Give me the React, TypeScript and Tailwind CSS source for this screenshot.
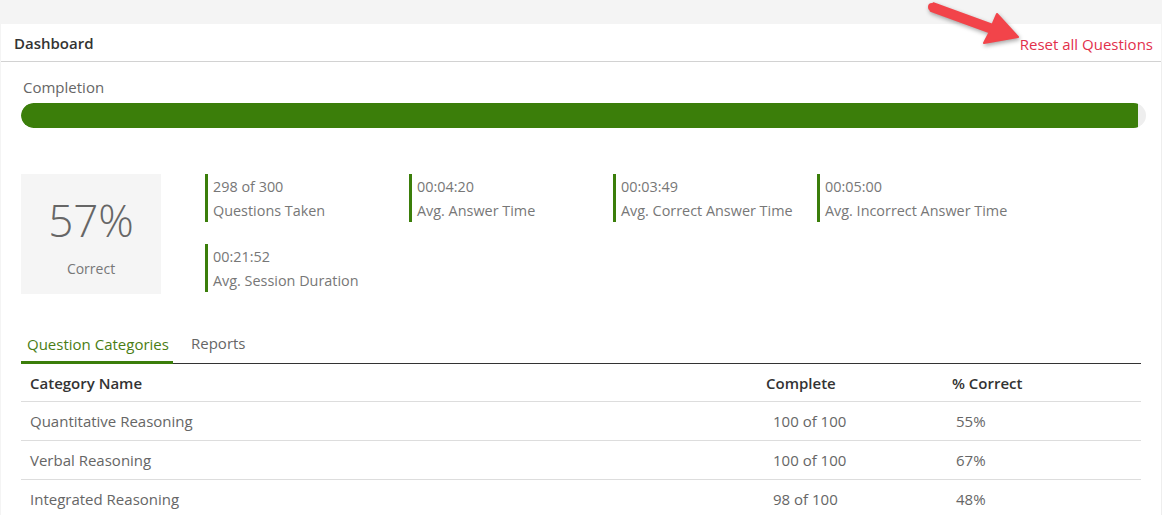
import React from "react";

const stats = [
  { v: "298 of 300", l: "Questions Taken" },
  { v: "00:04:20", l: "Avg. Answer Time" },
  { v: "00:03:49", l: "Avg. Correct Answer Time" },
  { v: "00:05:00", l: "Avg. Incorrect Answer Time" },
  { v: "00:21:52", l: "Avg. Session Duration" },
];

const rows = [
  { n: "Quantitative Reasoning", c: "100 of 100", p: "55%" },
  { n: "Verbal Reasoning", c: "100 of 100", p: "67%" },
  { n: "Integrated Reasoning", c: "98 of 100", p: "48%" },
];

export default function App() {
  return (
    <div
      className="relative w-[1162px] h-[515px] overflow-hidden bg-[#f4f4f4] pt-[24px]"
      style={{ fontFamily: "'Open Sans', 'Liberation Sans', sans-serif" }}
    >
      <div className="ml-[1px] w-[1160px] h-[491px] bg-white">
        <div className="h-[38px] flex items-center justify-between border-b border-[#d2d2d2] pl-[13px] pr-[8px]">
          <span className="text-[15px] font-semibold text-[#333] mt-[2px]">Dashboard</span>
          <span className="text-[15px] text-[#e2304b] mt-[3px]">Reset all Questions</span>
        </div>
        <div className="pl-[20px] pr-[15px]">
          <div className="pt-[15px] pl-[2px] text-[15px] leading-[20px] text-[#666]">Completion</div>
          <div className="mt-[6px] h-[25px] w-[1125px] rounded-full bg-[#eeeeee] overflow-hidden">
            <div className="h-full bg-[#3b7e0a] rounded-l-full" style={{ width: "1117px" }} />
          </div>
          <div className="mt-[46px] flex">
            <div className="w-[140px] h-[120px] bg-[#f5f5f5] flex flex-col items-center text-[#666]">
              <div className="mt-[18px] text-[44px] font-light leading-[56px]">57%</div>
              <div className="mt-[11px] text-[14px] leading-[20px] text-[#777]">Correct</div>
            </div>
            <div className="ml-[44px] grid grid-cols-[204px_204px_204px_204px] gap-y-[20px]">
              {stats.map((s) => (
                <div key={s.l} className="border-l-[3px] border-[#3b7e0a] pl-[5px] h-[48px] text-[14.4px] text-[#777] whitespace-nowrap">
                  <div className="leading-[24px] pt-[1px]">{s.v}</div>
                  <div className="leading-[24px]">{s.l}</div>
                </div>
              ))}
            </div>
          </div>
          <div className="mt-[33px] w-[1120px] flex border-b border-[#333] h-[37px] items-end">
            <div className="w-[152px] shrink-0 h-full flex items-center px-[6px] whitespace-nowrap text-[15px] text-[#4a7d14] border-b-[3px] border-[#3b7e0a] -mb-[1px]">
              Question Categories
            </div>
            <div className="h-full flex items-center pl-[18px] pb-[3px] whitespace-nowrap text-[15px] text-[#666]">Reports</div>
          </div>
          <div className="w-[1120px]">
            <div className="flex h-[38px] items-center border-b border-[#dddddd] text-[15px] font-semibold text-[#333] pt-[2px]">
              <div className="pl-[9px] w-[745px]">Category Name</div>
              <div className="w-[186px]">Complete</div>
              <div>% Correct</div>
            </div>
            {rows.map((r) => (
              <div key={r.n} className="flex h-[39px] items-center border-b border-[#dddddd] text-[15px] text-[#666]">
                <div className="pl-[9px] w-[752px]">{r.n}</div>
                <div className="w-[183px]">{r.c}</div>
                <div>{r.p}</div>
              </div>
            ))}
          </div>
        </div>
      </div>
      <div className="absolute right-0 top-[62px] w-[1px] h-[460px] bg-[#eeeeee]" />
      <svg
        className="absolute left-0 top-0 pointer-events-none drop-shadow-[1px_2px_2px_rgba(0,0,0,0.35)]"
        width="1162"
        height="60"
        viewBox="0 0 1162 60"
      >
        <polygon
          points="933.4,3.25 992.4,24.75 997,14 1018,37 984,43 989.6,32.25 930.6,10.75"
          fill="#f2444a"
          stroke="#f2444a"
          strokeWidth="2"
          strokeLinejoin="round"
        />
        <circle cx="932" cy="7" r="4" fill="#f2444a" />
      </svg>
    </div>
  );
}
